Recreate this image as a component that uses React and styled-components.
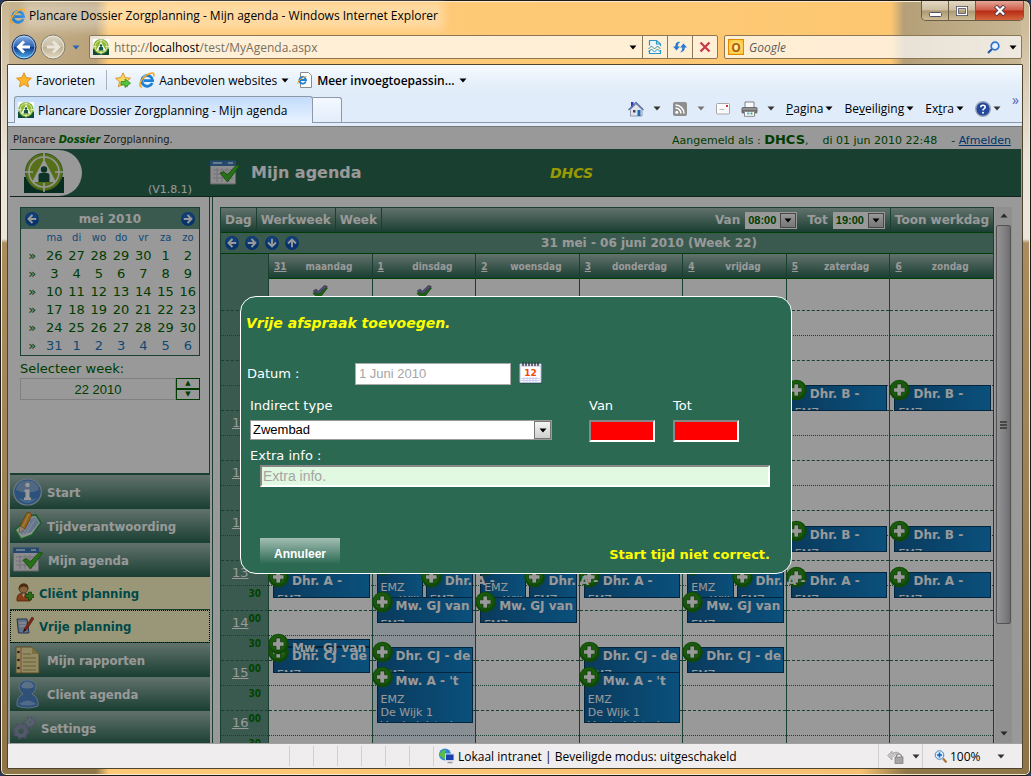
import React from 'react'
import styled, {createGlobalStyle, css} from 'styled-components'

const GlobalStyle = createGlobalStyle`
  *{
    box-sizing: border-box;
  }
  body{
    margin: 0;
    background-color: #2a3a5c;
  }
  button, input, select{
    font: inherit;
    color: inherit;
    margin: 0;
  }
  button{
    border: none;
    background: none;
    padding: 0;
    cursor: pointer;
  }
  svg{
    display: block;
    flex: none;
  }
`;

const chromeFont = '"Open Sans", "Noto Sans", sans-serif';
const pageFont = '"DejaVu Sans", sans-serif';
const narrowFont = '"DejaVu Sans Condensed", "DejaVu Sans", sans-serif';
const formFont = '"Liberation Sans", Arial, sans-serif';
const green = '#2b6953';
const darkGreen = '#006600';
const barGradient = 'linear-gradient(#a3beb4, #2b6953)';

/* ---------- icons ---------- */

const Caret = ({color = '#000'}) => (
  <svg width="8" height="5" viewBox="0 0 8 5"><path d="M0.5 0.5h7L4 4.5z" fill={color} /></svg>
)

const IeIcon = ({size = 16}) => (
  <svg width={size} height={size} viewBox="0 0 16 16">
    <path d="M13.200 11A5.400 5.400 0 1 1 13.600 8.600H4.600" fill="none" stroke="#1d7fd6" strokeWidth="2.800" />
    <path d="M3.600 7a4.600 4.600 0 0 1 4.400-4" fill="none" stroke="#7fd0fa" strokeWidth="1" />
    <path d="M2.500 15C-1.600 14 2.600 6.400 8 2.800c3.800-2.300 7.700-2.900 6.800 1" fill="none" stroke="#f2a51f" strokeWidth="1.600" strokeLinecap="round" />
  </svg>
)

const Favicon = ({size = 16}) => (
  <svg width={size} height={size} viewBox="0 0 40 40">
    <rect width="40" height="40" fill="#fff" />
    <path d="M0 24h40v16H0z" fill="#0f4a38" />
    <circle cx="20" cy="19" r="18.500" fill="#8fba2a" stroke="#4f8f2e" strokeWidth="1" />
    <circle cx="20" cy="19" r="15" fill="none" stroke="#fff" strokeWidth="1.500" />
    <path d="M20 0v7M20 30v9M0 19h9M31 19h9" stroke="#fff" strokeWidth="1.600" />
    <path d="M20 6l12 23H8z" fill="#fff" />
    <circle cx="20" cy="16.500" r="3.200" fill="#17563f" />
    <path d="M14.500 29v-6.500q0-2.500 2.500-2.500h6q2.500 0 2.500 2.500V29z" fill="#17563f" />
  </svg>
)

const NavCircle = ({flip}) => (
  <svg width="26" height="26" viewBox="0 0 26 26">
    <defs>
      <linearGradient id={flip ? 'fwd' : 'bck'} x1="0" y1="0" x2="0" y2="1">
        <stop offset="0" stopColor={flip ? '#d9d4c4' : '#8db4e6'} />
        <stop offset="0.480" stopColor={flip ? '#c9bfa6' : '#2a62b4'} />
        <stop offset="0.520" stopColor={flip ? '#bdb195' : '#0f3c8c'} />
        <stop offset="1" stopColor={flip ? '#e6dcc2' : '#4fb4f5'} />
      </linearGradient>
    </defs>
    <circle cx="13" cy="13" r="12" fill={`url(#${flip ? 'fwd' : 'bck'})`} stroke={flip ? '#85806f' : '#1c3761'} />
    <circle cx="13" cy="13" r="10.800" fill="none" stroke="#fff" strokeOpacity="0.5" />
    <path
      d="M19 13H8M13 7.500L7.500 13 13 18.500"
      transform={flip ? 'rotate(180 13 13)' : undefined}
      fill="none" stroke={flip ? '#e9e5d9' : '#fff'} strokeWidth="3"
    />
  </svg>
)

const Star = ({arrow}) => (
  <svg width="16" height="16" viewBox="0 0 16 16">
    <path d="M8 0.800l2.200 4.800 5.200 0.600-3.900 3.500 1.100 5.200L8 12.300l-4.600 2.600 1.100-5.200L0.600 6.200l5.200-0.600z" fill={arrow ? '#fbd968' : '#fdb52b'} stroke="#d98a17" strokeWidth="0.900" />
    {arrow && <path d="M6 9.500h4V7l5.500 4.200L10 15.500V13H6z" fill="#57c23b" stroke="#2c8a1c" strokeWidth="0.800" />}
  </svg>
)

const PageIe = () => (
  <svg width="16" height="16" viewBox="0 0 16 16">
    <path d="M3.500 0.500h8l3 3v12h-11z" fill="#fff" stroke="#8b8b8b" />
    <path d="M8.800 9.500A3.300 3.300 0 1 1 9 8H3" fill="none" stroke="#1d7fd6" strokeWidth="1.800" />
    <path d="M1 12c-1-2 3-6.500 8.500-7.500" fill="none" stroke="#f2a51f" />
  </svg>
)

const CompatIcon = () => (
  <svg width="14" height="16" viewBox="0 0 14 16">
    <path d="M1.500 6.500v-5h7l4 3.500v2M1.500 11v3.500h11V11M8.500 1.500V5h4" fill="#e9f7fb" stroke="#2f97c4" strokeWidth="1.200" />
    <path d="M0.500 10l3-3 3 3 3-3 3 3M0.500 13l3-3 3 3 3-3 3 3" fill="none" stroke="#2f97c4" />
  </svg>
)

const RefreshIcon = () => (
  <svg width="16" height="16" viewBox="0 0 16 16">
    <path d="M1 7.500L4.500 11.500 8 7.500H5.800q0-3.500 2.700-4.500Q3.500 2 3.200 7.500z" fill="#2b7bd0" />
    <path d="M8 8.500L11.500 4.500 15 8.500H12.800q0 4.500-5.300 5Q10.500 12 10.200 8.500z" fill="#2b7bd0" />
  </svg>
)

const StopIcon = () => (
  <svg width="12" height="12" viewBox="0 0 12 12"><path d="M1.500 1.500l9 9M10.500 1.500l-9 9" stroke="#c8374a" strokeWidth="2.200" /></svg>
)

const SearchIcon = () => (
  <svg width="13" height="13" viewBox="0 0 13 13">
    <circle cx="8" cy="5" r="3.800" fill="#eaf3fd" stroke="#2f76cf" strokeWidth="1.700" />
    <path d="M5 8l-4 4" stroke="#2358a8" strokeWidth="2.200" />
  </svg>
)

const HomeIcon = () => (
  <svg width="16" height="16" viewBox="0 0 16 16">
    <rect x="3" y="1" width="2.500" height="5" fill="#2a39c4" />
    <path d="M2.500 8.500L8 3l6 5.500V15h-11.500z" fill="#dfe4ee" stroke="#7d8597" strokeWidth="0.800" />
    <path d="M0.500 9L8 1.500 15.500 9" fill="none" stroke="#5a6fa8" strokeWidth="1.400" />
    <rect x="5" y="9" width="2.500" height="2.500" fill="#3a465c" />
    <rect x="9.500" y="9" width="3" height="6" fill="#1e6bb0" />
  </svg>
)

const RssIcon = () => (
  <svg width="16" height="16" viewBox="0 0 16 16">
    <rect x="1" y="1" width="14" height="14" rx="2" fill="#8e8e8e" />
    <circle cx="4.800" cy="11.300" r="1.500" fill="#fff" />
    <path d="M3.500 7a5.500 5.500 0 0 1 5.500 5.500M3.500 4a8.500 8.500 0 0 1 8.500 8.500" fill="none" stroke="#fff" strokeWidth="1.500" />
  </svg>
)

const MailIcon = () => (
  <svg width="14" height="12" viewBox="0 0 14 12">
    <rect x="0.500" y="0.500" width="13" height="10.500" rx="1" fill="#fbfbfb" stroke="#a7a7a7" />
    <path d="M3.500 6.500h5" stroke="#bbb" /><rect x="10" y="2" width="2" height="2" fill="#d0312b" />
  </svg>
)

const PrintIcon = () => (
  <svg width="17" height="16" viewBox="0 0 17 16">
    <path d="M4 1h9v6H4z" fill="#fafafa" stroke="#808080" />
    <rect x="0.500" y="6" width="16" height="6.500" rx="1.500" fill="#6d6d6d" />
    <path d="M1.500 8h14" stroke="#b5b5b5" />
    <path d="M3.500 10.500h10v4.800h-10z" fill="#fff" stroke="#888" />
    <path d="M6 12.500h2.500" stroke="#5db5e6" strokeWidth="2" /><path d="M9.500 12.500h2" stroke="#47a15a" strokeWidth="2" />
  </svg>
)

const HelpIcon = () => (
  <svg width="16" height="16" viewBox="0 0 16 16">
    <circle cx="8" cy="8" r="7.300" fill="#23489d" stroke="#9aa5b8" strokeWidth="1.400" />
    <path d="M5.800 6.200q0-2 2.200-2t2.200 1.800q0 1.200-1.300 1.900-0.900 0.500-0.900 1.500" fill="none" stroke="#fff" strokeWidth="1.600" />
    <circle cx="8" cy="11.800" r="1" fill="#fff" />
  </svg>
)

const ArrowDot = ({turn = 0, size = 14}) => (
  <svg width={size} height={size} viewBox="0 0 14 14">
    <circle cx="7" cy="7" r="6.900" fill="#0a55b5" />
    <path d="M1.500 6a5.500 5.500 0 0 1 11 0q-5.500 2-11 0" fill="#2f80da" opacity="0.500" />
    <path d="M11.300 7H4M7.500 3L3.500 7l4 4" transform={`rotate(${turn} 7 7)`} fill="none" stroke="#fff" strokeWidth="1.900" />
  </svg>
)

const PlusDot = () => (
  <svg width="21" height="22" viewBox="0 0 21 22">
    <circle cx="10.500" cy="11" r="10.300" fill="#1c7a0c" />
    <circle cx="10" cy="10" r="8.500" fill="#2a9716" />
    <path d="M8 5h4.500v3.800H16v4.400h-3.500V17H8v-3.800H4.500V8.800H8z" fill="#fff" stroke="#0f5c06" strokeWidth="0.700" />
  </svg>
)

const CheckMark = () => (
  <svg width="16" height="14" viewBox="0 0 16 14">
    <path d="M1 8.500l3-3L6.500 8 12.500 1.500l3 1.500L7 14z" fill="#2fa51a" stroke="#1c6a10" strokeWidth="0.600" />
    <path d="M1 6L4 4 6.500 6 12.500 0.300l3 1.200L7 9z" fill="#8080b8" stroke="#444a6a" strokeWidth="0.500" />
  </svg>
)

const AgendaIcon = () => (
  <svg width="30" height="26" viewBox="0 0 30 26">
    <path d="M0.500 5h25v19h-25z" fill="#e9e9ee" stroke="#a5a5ad" />
    <path d="M0 0.500h26V6H0z" fill="#3f7bb8" />
    <path d="M3 3h9M18 3h5" stroke="#d6e6f5" strokeWidth="1.500" />
    <path d="M3 10h20M3 14h20M3 18h20M7 8v14M12 8v14M17 8v14" stroke="#bfbfc8" />
    <path d="M10 13l4-1.500 3 3.500L26.500 5l3 1L17.500 22z" fill="#42ba2a" stroke="#1f7a12" strokeWidth="0.800" />
  </svg>
)

const InfoIcon = () => (
  <svg width="29" height="28" viewBox="0 0 29 28">
    <ellipse cx="14.500" cy="14" rx="13.800" ry="13" fill="#4a88cc" stroke="#b4c8e0" strokeWidth="1.200" />
    <path d="M3 12q1-9.500 11.500-9.500T26 12q-11.500 5-23 0" fill="#93b6dc" opacity="0.800" />
    <path d="M5 20q9.500 10 19 0-9.500 3-19 0" fill="#86bdf2" opacity="0.700" />
    <circle cx="14.500" cy="7" r="2.300" fill="#fff" />
    <path d="M11.500 11.500h5v8h1.500v2.500h-7v-2.500h1.500v-5.500h-1z" fill="#fff" />
  </svg>
)

const NotesIcon = () => (
  <svg width="29" height="30" viewBox="0 0 29 30">
    <path d="M2 19l6 9 11-4 9-12-5-8-6 1z" fill="#e8f3ea" stroke="#2b9c4a" strokeWidth="1.600" />
    <path d="M6 19l3 5 9-3 8-9-4-6-6 3z" fill="#a9c6f0" />
    <path d="M9 25l8-14M13 23l9-15" stroke="#e6eefb" strokeWidth="0.900" />
    <path d="M7 15l5 3 7-14q-1-3-5-2.500z" fill="#f3a62d" stroke="#a86212" strokeWidth="0.800" />
    <path d="M9.500 16.500l6.500-14" stroke="#ffd884" strokeWidth="1.200" />
    <path d="M7 15l-1 7 6-4z" fill="#f4dcb0" stroke="#9a7440" strokeWidth="0.500" />
  </svg>
)

const ClientIcon = () => (
  <svg width="18" height="20" viewBox="0 0 18 20">
    <path d="M1 18q-1-8 6.500-8t6.500 8z" fill="#dd6a2b" stroke="#8a3c12" strokeWidth="0.800" />
    <path d="M6 10.500l1.500 4 1.500-4z" fill="#fff" />
    <circle cx="7.500" cy="5.500" r="4.500" fill="#e0a566" stroke="#74421b" strokeWidth="0.800" />
    <path d="M2.800 6q0-5.500 5-5.500T12.300 6q-2-3-5-2.500T2.800 6z" fill="#7d4a1c" />
    <path d="M9.500 11.500h3V9h3v2.500H18v3h-2.500V17h-3v-2.500h-3z" fill="#45b52c" stroke="#186b0c" strokeWidth="0.700" />
  </svg>
)

const EditIcon = () => (
  <svg width="18" height="20" viewBox="0 0 18 20">
    <path d="M1 3h10l2 14H2.500z" fill="#a9bede" stroke="#3f5580" />
    <path d="M3 7h7M3.500 10h7" stroke="#fff" />
    <path d="M8 13L16 1l2 1.500L10.500 14z" fill="#d04020" stroke="#7d1e0b" strokeWidth="0.500" />
    <path d="M8 13l-1 3.500 3.500-2.500z" fill="#222" />
  </svg>
)

const ReportIcon = () => (
  <svg width="29" height="28" viewBox="0 0 29 28">
    <path d="M3 1h16l7 7v19H3z" fill="#f3e6a3" stroke="#8d7f3c" />
    <path d="M19 1v7h7z" fill="#cbbb6c" />
    <path d="M10 8h8M10 12h13M10 16h13M10 20h13M10 24h13" stroke="#b3a35a" />
    <path d="M8 1v26" stroke="#d87a5c" />
    <circle cx="5.500" cy="6" r="1.300" fill="#333" /><circle cx="5.500" cy="14" r="1.300" fill="#333" /><circle cx="5.500" cy="22" r="1.300" fill="#333" />
  </svg>
)

const PersonIcon = () => (
  <svg width="29" height="30" viewBox="0 0 29 30">
    <path d="M4 27q-1-9 6-12 -4-3-4-7.500Q7 1 14.500 1T23 7.500q0 4.500-4 7.500 7 3 6 12 -10.500 4-21 0z" fill="#4f88c6" stroke="#a5c2e2" strokeWidth="0.900" />
    <path d="M8 8q1-5.500 6.500-5.500T21 8q-6.500 3-13 0z" fill="#a9c9ea" opacity="0.800" />
    <path d="M6 25q8.500-7 17 0-8.500 3-17 0z" fill="#9cc6ee" opacity="0.700" />
  </svg>
)

const GearsIcon = () => (
  <svg width="23" height="24" viewBox="0 0 23 24">
    <circle cx="8" cy="15" r="4.800" fill="none" stroke="#8d93b3" strokeWidth="4" />
    <circle cx="8" cy="15" r="7.300" fill="none" stroke="#7f86a8" strokeWidth="2" strokeDasharray="2.900 2.830" />
    <circle cx="17" cy="6" r="3" fill="none" stroke="#9ba1c0" strokeWidth="2.500" />
    <circle cx="17" cy="6" r="4.800" fill="none" stroke="#7f86a8" strokeWidth="1.700" strokeDasharray="1.900 1.870" />
  </svg>
)

const DateIcon = () => (
  <svg width="24" height="23" viewBox="0 0 24 23">
    <path d="M2 2.500h20.500L23 21.500H1.500z" fill="#1f4a3c" />
    <path d="M1 2h21v18.500H1z" fill="#fff" stroke="#b9bce0" />
    <path d="M1 2h21v3H1z" fill="#dcdcf2" />
    <path d="M4 0.500v3.500M7 0.500v3.500M10 0.500v3.500M13 0.500v3.500M16 0.500v3.500M19 0.500v3.500" stroke="#222" strokeWidth="1.200" />
    <path d="M2 16.500h19M2 18.500h19M5 15v5M8 15v5M11 15v5M14 15v5M17 15v5" stroke="#c3c3ec" strokeWidth="0.800" />
    <text x="11.500" y="14" textAnchor="middle" fontFamily="DejaVu Sans" fontWeight="bold" fontSize="9" fill="#f04a10">12</text>
  </svg>
)

const ZoneIcon = () => (
  <svg width="17" height="16" viewBox="0 0 17 16">
    <circle cx="7" cy="6.500" r="6" fill="#2f86d8" />
    <path d="M2 5q3-4 6-3.500L7 5l2 3-3 3.500Q4 9 2 8z" fill="#5bbd45" />
    <rect x="7.500" y="6" width="8.500" height="6.500" fill="#1c3fae" stroke="#d5d9e4" />
    <path d="M9.500 14.500h5" stroke="#9a9a9a" strokeWidth="1.500" />
  </svg>
)

const LockIcon = () => (
  <svg width="17" height="15" viewBox="0 0 17 15">
    <path d="M0.500 6.500L5 2v2.500q5-3 8 0.500-5-1-8 3.500V11z" fill="#c4c4c4" stroke="#909090" strokeWidth="0.600" />
    <rect x="8" y="8" width="8" height="6.500" fill="#a5a5a5" stroke="#777" strokeWidth="0.700" />
    <path d="M9.500 8V6.500q2.500-3 5 0V8" fill="none" stroke="#888" strokeWidth="1.200" />
  </svg>
)

const ZoomIcon = () => (
  <svg width="13" height="13" viewBox="0 0 13 13">
    <circle cx="5.500" cy="5" r="4.300" fill="#d9ecfb" stroke="#4a86c0" />
    <path d="M5.500 2.500v5M3 5h5" stroke="#1560c0" strokeWidth="1.600" /><path d="M9 8.500l3.500 4" stroke="#a3702f" strokeWidth="2" />
  </svg>
)

/* ---------- data ---------- */

const weekdays = ['ma', 'di', 'wo', 'do', 'vr', 'za', 'zo'];
const weeks = [
  [26, 27, 28, 29, 30, 1, 2],
  [3, 4, 5, 6, 7, 8, 9],
  [10, 11, 12, 13, 14, 15, 16],
  [17, 18, 19, 20, 21, 22, 23],
  [24, 25, 26, 27, 28, 29, 30],
  [31, 1, 2, 3, 4, 5, 6],
];

const menu = [
  {label: 'Start', icon: <InfoIcon />},
  {label: 'Tijdverantwoording', icon: <NotesIcon />},
  {label: 'Mijn agenda', icon: <AgendaIcon />},
  {label: 'Cliënt planning', icon: <ClientIcon />, sub: true},
  {label: 'Vrije planning', icon: <EditIcon />, sub: true, focused: true},
  {label: 'Mijn rapporten', icon: <ReportIcon />},
  {label: 'Client agenda', icon: <PersonIcon />},
  {label: 'Settings', icon: <GearsIcon />},
];

const FIRST_HOUR = 8;
const HOUR_HEIGHT = 50;
const hours = [8, 9, 10, 11, 12, 13, 14, 15, 16];

const emz = ['EMZ'];
const address = ['EMZ', 'De Wijk 1', 'Verdedelstad'];
const double = [
  {start: '13:00', length: 45, name: '', lines: address, slot: 'left'},
  {start: '13:15', length: 30, name: 'Dhr. A -', lines: emz, slot: 'right'},
];
const visitA = {start: '13:15', length: 30, name: 'Dhr. A -', lines: emz};
const visitB = [
  {start: '09:30', length: 30, name: 'Dhr. B -', lines: emz},
  {start: '12:20', length: 30, name: 'Dhr. B -', lines: emz},
];
const visitGJ = {start: '13:45', length: 30, name: 'Mw. GJ van', lines: emz};
const visitCJ = {start: '14:45', length: 30, name: 'Dhr. CJ - de', lines: emz};
const visitT = {start: '15:15', length: 60, name: "Mw. A - 't", lines: address};

const days = [
  {date: 31, name: 'maandag', done: true, events: [visitA, visitCJ, {start: '14:35', length: 9, name: 'Mw. GJ van', lines: []}]},
  {date: 1, name: 'dinsdag', done: true, today: true, events: [...double, visitGJ, visitCJ, visitT]},
  {date: 2, name: 'woensdag', events: [...double, visitGJ]},
  {date: 3, name: 'donderdag', events: [visitA, visitCJ, visitT]},
  {date: 4, name: 'vrijdag', events: [...double, visitGJ, visitCJ]},
  {date: 5, name: 'zaterdag', events: [...visitB, visitA]},
  {date: 6, name: 'zondag', events: [...visitB, visitA]},
];

const toTop = (time) => {
  const [h, m] = time.split(':').map(Number);
  return Math.floor((h - FIRST_HOUR + m / 60) * HOUR_HEIGHT);
}

/* ---------- page parts ---------- */

function MiniCalendar() {
  return (
    <MonthBox>
      <MonthHead>
        <button aria-label="Vorige maand"><ArrowDot /></button>
        <span>mei 2010</span>
        <button aria-label="Volgende maand"><ArrowDot turn={180} /></button>
      </MonthHead>
      <MonthTable>
        <thead>
          <tr>
            <th />
            {weekdays.map((d) => <th key={d}>{d}</th>)}
          </tr>
        </thead>
        <tbody>
          {weeks.map((week, i) => (
            <tr key={i}>
              <td>»</td>
              {week.map((d) => <Day key={d} $other={i === 5}>{d}</Day>)}
            </tr>
          ))}
        </tbody>
      </MonthTable>
    </MonthBox>
  )
}

function Appointment({event}) {
  return (
    <EventBox $slot={event.slot} style={{top: toTop(event.start), height: Math.floor(event.length * HOUR_HEIGHT / 60) + 1}}>
      <EventBadge><PlusDot /></EventBadge>
      <EventName>{event.name}</EventName>
      <EventLines>
        {event.lines.map((line) => <div key={line}>{line}</div>)}
      </EventLines>
    </EventBox>
  )
}

function HourSelect({id, label, value}) {
  return (
    <HourField>
      <label htmlFor={id}>{label}</label>
      <SelectBox $small>
        <select id={id} defaultValue={value}><option>{value}</option></select>
        <SelectArrow><Caret /></SelectArrow>
      </SelectBox>
    </HourField>
  )
}

function Agenda() {
  return (
    <AgendaBox>
      <AgendaBar>
        <BarButton>Dag</BarButton>
        <BarButton>Werkweek</BarButton>
        <BarButton>Week</BarButton>
        <Spacer />
        <HourSelect id="hour-from" label="Van" value="08:00" />
        <HourSelect id="hour-to" label="Tot" value="19:00" />
        <BarButton $last>Toon werkdag</BarButton>
      </AgendaBar>
      <RangeBar>
        <button aria-label="Vorige"><ArrowDot /></button>
        <button aria-label="Volgende"><ArrowDot turn={180} /></button>
        <button aria-label="Omlaag"><ArrowDot turn={270} /></button>
        <button aria-label="Omhoog"><ArrowDot turn={90} /></button>
        <span>31 mei - 06 juni 2010 (Week 22)</span>
      </RangeBar>
      <WeekGrid>
        <HourColumn>
          <HeadSpace />
          {hours.map((h) => (
            <HourCell key={h}>
              <a href={`#${h}`}>{h}</a>
              <Minutes><span>00</span><span>30</span></Minutes>
            </HourCell>
          ))}
        </HourColumn>
        {days.map((day) => (
          <DayColumn key={day.name}>
            <DayHead><a href={`#${day.name}`}>{day.date}</a><span>{day.name}</span></DayHead>
            <AllDay>{day.done && <CheckMark />}</AllDay>
            <DayCanvas $today={day.today}>
              {hours.map((h) => <Slot key={h} />)}
              {day.events.map((event, i) => <Appointment key={i} event={event} />)}
            </DayCanvas>
          </DayColumn>
        ))}
      </WeekGrid>
    </AgendaBox>
  )
}

function AppointmentDialog() {
  return (
    <Dialog role="dialog" aria-labelledby="dialog-title">
      <h2 id="dialog-title">Vrije afspraak toevoegen.</h2>
      <DateRow>
        <label htmlFor="date">Datum :</label>
        <DateInput id="date" type="text" defaultValue="1 Juni 2010" />
        <button aria-label="Kies datum"><DateIcon /></button>
      </DateRow>
      <TypeRow>
        <Field>
          <label htmlFor="type">Indirect type</label>
          <SelectBox>
            <select id="type" defaultValue="Zwembad"><option>Zwembad</option></select>
            <SelectArrow $light><Caret /></SelectArrow>
          </SelectBox>
        </Field>
        <Times>
          <Field>
            <label htmlFor="from">Van</label>
            <TimeInput id="from" type="text" />
          </Field>
          <Field>
            <label htmlFor="to">Tot</label>
            <TimeInput id="to" type="text" />
          </Field>
        </Times>
      </TypeRow>
      <InfoField>
        <label htmlFor="info">Extra info :</label>
        <InfoInput id="info" type="text" placeholder="Extra info." />
      </InfoField>
      <DialogFoot>
        <CancelButton>Annuleer</CancelButton>
        <strong>Start tijd niet correct.</strong>
      </DialogFoot>
    </Dialog>
  )
}

export default function App() {
  return (
    <Window>
      <GlobalStyle />
      <TitleBar>
        <IeIcon />
        <h1>Plancare Dossier Zorgplanning - Mijn agenda - Windows Internet Explorer</h1>
        <WindowButtons>
          <button aria-label="Minimaliseren"><svg width="13" height="12" viewBox="0 0 13 12"><rect x="0.500" y="7.500" width="12" height="4" rx="1" fill="#fff" stroke="#525266" /></svg></button>
          <button aria-label="Maximaliseren"><svg width="12" height="10" viewBox="0 0 12 10"><rect x="1.500" y="1.500" width="9" height="7" fill="none" stroke="#525266" strokeWidth="3" /><rect x="1.500" y="1.500" width="9" height="7" fill="none" stroke="#fff" strokeWidth="1.300" /></svg></button>
          <button aria-label="Sluiten"><svg width="12" height="11" viewBox="0 0 12 11"><path d="M1.500 1l9 9M10.500 1l-9 9" stroke="#4b3b4b" strokeWidth="4" /><path d="M2 1.500l8 8M10 1.500l-8 8" stroke="#fff" strokeWidth="2.300" /></svg></button>
        </WindowButtons>
      </TitleBar>

      <AddressRow>
        <NavButtons>
          <button aria-label="Terug"><NavCircle /></button>
          <button aria-label="Vooruit"><NavCircle flip /></button>
          <button aria-label="Recente pagina's"><Caret color="#2a62b4" /></button>
        </NavButtons>
        <AddressBox>
          <Favicon />
          <Url role="textbox" aria-label="Adres">http://<b>localhost</b>/test/MyAgenda.aspx</Url>
          <button aria-label="Adressen"><Caret /></button>
          <BoxButton aria-label="Compatibiliteitsweergave"><CompatIcon /></BoxButton>
          <BoxButton aria-label="Vernieuwen"><RefreshIcon /></BoxButton>
          <BoxButton aria-label="Stoppen"><StopIcon /></BoxButton>
        </AddressBox>
        <SearchBox>
          <SearchLogo>O</SearchLogo>
          <input type="text" aria-label="Zoeken" placeholder="Google" />
          <button aria-label="Zoek"><SearchIcon /></button>
          <button aria-label="Zoekopties"><Caret /></button>
        </SearchBox>
      </AddressRow>

      <Frame>
        <LinksBar>
          <LinkButton><Star />Favorieten</LinkButton>
          <Divider />
          <LinkButton aria-label="Toevoegen"><Star arrow /></LinkButton>
          <LinkButton><IeIcon />Aanbevolen websites<Caret /></LinkButton>
          <LinkButton $bold><PageIe />Meer invoegtoepassin...<Caret /></LinkButton>
        </LinksBar>
        <TabBar>
          <Tab><Favicon />Plancare Dossier Zorgplanning - Mijn agenda</Tab>
          <NewTab aria-label="Nieuw tabblad" />
          <Commands>
            <Command $wide aria-label="Startpagina"><HomeIcon /><Caret color="#333" /></Command>
            <Command $wide aria-label="Feeds"><RssIcon /><Caret color="#777" /></Command>
            <Command aria-label="Mail"><MailIcon /></Command>
            <Command $wide aria-label="Afdrukken"><PrintIcon /><Caret color="#333" /></Command>
            <Command><span><u>P</u>agina</span><Caret /></Command>
            <Command><span>Be<u>v</u>eiliging</span><Caret /></Command>
            <Command><span>Ex<u>t</u>ra</span><Caret /></Command>
            <Command aria-label="Help"><HelpIcon /><Caret color="#333" /></Command>
            <More aria-label="Meer">»</More>
          </Commands>
        </TabBar>

        <Page>
          <TopLine>
            <div>Plancare <em>Dossier</em> Zorgplanning.</div>
            <Session>
              <span>Aangemeld als : <strong>DHCS</strong>,</span>
              <span>di 01 jun 2010 22:48</span>
              <span>- <a href="#logout">Afmelden</a></span>
            </Session>
          </TopLine>
          <Banner>
            <Brand>
              <LogoPanel><Favicon size={40} /></LogoPanel>
              <span>(V1.8.1)</span>
            </Brand>
            <BannerTitle><AgendaIcon /><h2>Mijn agenda</h2></BannerTitle>
            <BannerUser>DHCS</BannerUser>
          </Banner>
          <Body>
            <Sidebar>
              <SideTools>
                <MiniCalendar />
                <WeekLabel htmlFor="week">Selecteer week:</WeekLabel>
                <WeekPicker>
                  <input id="week" type="text" defaultValue="22 2010" />
                  <Stepper>
                    <button aria-label="Volgende week">▲</button>
                    <button aria-label="Vorige week">▼</button>
                  </Stepper>
                </WeekPicker>
              </SideTools>
              <nav>
                {menu.map((item) => (
                  <MenuItem key={item.label} href={`#${item.label}`} $sub={item.sub} $focused={item.focused}>
                    {item.icon}{item.label}
                  </MenuItem>
                ))}
              </nav>
            </Sidebar>
            <Main>
              <Agenda />
              <ScrollBar>
                <svg width="8" height="5" viewBox="0 0 8 5"><path d="M0.500 4.500h7L4 0.500z" fill="#444" /></svg>
                <Thumb><i /><i /><i /></Thumb>
                <Caret color="#444" />
              </ScrollBar>
            </Main>
          </Body>
          <Overlay>
            <AppointmentDialog />
          </Overlay>
        </Page>

        <StatusBar>
          <StatusCells><i /><i /><i /><i /><i /><i /><i /></StatusCells>
          <ZoneIcon />
          <Zone>Lokaal intranet | Beveiligde modus: uitgeschakeld</Zone>
          <StatusButton aria-label="Beveiliging"><LockIcon /><Caret color="#333" /></StatusButton>
          <StatusButton $zoom><ZoomIcon /><span>100%</span><Caret color="#333" /></StatusButton>
        </StatusBar>
      </Frame>
    </Window>
  )
}

/* ---------- browser window ---------- */

const Window = styled.div`
  height: 100vh;
  min-height: 600px;
  display: flex;
  flex-direction: column;
  padding: 0 7px 6px 6px;
  border: 1px solid #1f1a14;
  border-radius: 7px 7px 6px 6px;
  font-family: ${chromeFont};
  font-size: 12px;
  color: #000;
  box-shadow: inset 0 0 0 1px #f5ead4;
  background:
    linear-gradient(#c8b48f 0, #ebe5da 160px, #ebe5da 238px, #a98d5f 242px, #8e7548 100%) left / 8px 100% no-repeat,
    linear-gradient(#c8b48f 0, #ebe5da 160px, #ebe5da 238px, #a98d5f 242px, #8e7548 100%) right / 9px 100% no-repeat,
    linear-gradient(90deg, #8f774a 0, #8f774a 95px, #ffca77 108px, #f6c071 860px, #8f774a 905px) bottom / 100% 8px no-repeat,
    linear-gradient(90deg, #c8b48f 0, #b9a27a 95px, #ffcb79 108px, #fdc772 890px, #b49f78 903px, #c9b896 100%);
`;

const TitleBar = styled.header`
  display: flex;
  align-items: center;
  gap: 3px;
  height: 29px;
  flex: none;
  padding-left: 3px;
  h1{
    margin: 0;
    font-size: 12px;
    font-weight: 400;
    white-space: nowrap;
    background-color: rgba(255,255,255,0.3);
    box-shadow: 0 0 10px 6px rgba(255,255,255,0.3);
  }
`;

const WindowButtons = styled.div`
  display: flex;
  align-self: flex-start;
  margin: 0 -1px 0 auto;
  height: 20px;
  border: 1px solid #6b5c48;
  border-top: none;
  border-radius: 0 0 5px 5px;
  overflow: hidden;
  button{
    display: flex;
    align-items: center;
    justify-content: center;
    width: 27px;
    border-right: 1px solid #6b5c48;
    background: linear-gradient(#e3d8c5, #cdbd9f 48%, #ab9871 52%, #cdbc96);
  }
  button:last-child{
    width: 47px;
    border-right: none;
    background: linear-gradient(#e5a698, #cf5a48 48%, #b62a16 52%, #d4653c);
  }
`;

const AddressRow = styled.div`
  display: flex;
  align-items: center;
  gap: 6px;
  height: 34px;
  flex: none;
  padding: 0 1px 0 4px;
`;

const NavButtons = styled.div`
  display: flex;
  align-items: center;
  gap: 3px;
  width: 72px;
  button:last-child{
    margin-left: 3px;
  }
`;

const inputBox = css`
  display: flex;
  align-items: center;
  height: 24px;
  border: 1px solid #8a7753;
  border-radius: 2px;
  background-color: rgba(255,255,255,0.7);
`;

const AddressBox = styled.div`
  ${inputBox}
  flex: 1;
  padding-left: 3px;
`;

const Url = styled.div`
  flex: 1;
  padding-left: 5px;
  color: #77705f;
  b{
    color: #000;
    font-weight: 400;
  }
`;

const BoxButton = styled.button`
  display: flex;
  align-items: center;
  justify-content: center;
  width: 25px;
  height: 22px;
  border-left: 1px solid #8a7753;
  button + &{
    margin-left: 5px;
  }
  & + &{
    margin-left: 0;
  }
`;

const SearchBox = styled.div`
  ${inputBox}
  width: 298px;
  padding: 0 4px 0 3px;
  gap: 5px;
  input{
    flex: 1;
    min-width: 0;
    border: none;
    padding: 0;
    outline: none;
    background: transparent;
    font-style: italic;
  }
  input::placeholder{
    color: #5c5c5c;
  }
  button:last-child{
    padding-left: 4px;
  }
`;

const SearchLogo = styled.span`
  width: 16px;
  height: 16px;
  line-height: 15px;
  text-align: center;
  font-weight: 700;
  color: #b35c00;
  border: 1px solid #e08a00;
  background: radial-gradient(#fff3c0, #ffbe1a);
`;

const Frame = styled.div`
  flex: 1;
  min-height: 0;
  display: flex;
  flex-direction: column;
  border: 1px solid #4f452f;
  border-radius: 1px;
  background-color: #e0ecf9;
`;

const LinksBar = styled.div`
  display: flex;
  align-items: center;
  gap: 8px;
  height: 30px;
  flex: none;
  padding-left: 8px;
  background: linear-gradient(#f5fafe, #e6f0fb 60%, #e0ecf9);
`;

const LinkButton = styled.button`
  display: flex;
  align-items: center;
  gap: 4px;
  font-weight: ${(props) => props.$bold ? 600 : 400};
  white-space: nowrap;
`;

const Divider = styled.i`
  width: 1px;
  height: 20px;
  margin-left: 3px;
  background-color: #a9b2bd;
`;

const TabBar = styled.div`
  display: flex;
  align-items: flex-end;
  height: 28px;
  flex: none;
  padding-left: 6px;
  border-bottom: 1px solid #8d99a8;
`;

const Tab = styled.button`
  display: flex;
  align-items: center;
  gap: 4px;
  width: 299px;
  height: 27px;
  margin-bottom: -1px;
  padding: 0 3px;
  border: 1px solid #8d99a8;
  border-bottom: none;
  border-radius: 3px 3px 0 0;
  background: linear-gradient(#c2dcfb, #e9f3ff);
  white-space: nowrap;
`;

const NewTab = styled.button`
  width: 29px;
  height: 25px;
  border: 1px solid #8d99a8;
  border-left: none;
  border-bottom: none;
  border-radius: 0 3px 0 0;
  background: linear-gradient(#f4f9ff, #e2edfa);
`;

const Commands = styled.div`
  display: flex;
  align-items: center;
  align-self: stretch;
  gap: 11px;
  margin-left: auto;
  padding-right: 3px;
`;

const Command = styled.button`
  display: flex;
  align-items: center;
  gap: ${(props) => props.$wide ? 9 : 2}px;
`;

const More = styled.button`
  align-self: flex-start;
  line-height: 10px;
  font-size: 14px;
  color: #5560b8;
`;

const StatusBar = styled.footer`
  display: flex;
  align-items: center;
  height: 25px;
  flex: none;
  padding-right: 17px;
  border-top: 1px solid #a0a0a0;
  background-color: #f0edee;
`;

const StatusCells = styled.div`
  display: flex;
  align-self: stretch;
  margin: 2px 4px 2px 258px;
  i{
    width: 24px;
    border-right: 1px solid #d2cfcf;
  }
`;

const Zone = styled.span`
  flex: 1;
  padding-left: 3px;
`;

const StatusButton = styled.button`
  display: flex;
  align-items: center;
  align-self: stretch;
  gap: ${(props) => props.$zoom ? 3 : 8}px;
  width: ${(props) => props.$zoom ? 83 : 44}px;
  padding: 0 0 0 ${(props) => props.$zoom ? 11 : 8}px;
  border-left: 1px solid #d2cfcf;
  span{
    flex: 1;
    text-align: left;
  }
`;

/* ---------- web page ---------- */

const Page = styled.div`
  position: relative;
  flex: 1;
  min-height: 0;
  display: flex;
  flex-direction: column;
  margin: 3px 0 0;
  padding: 0 1px 0 2px;
  border-top: 1px solid #777;
  background-color: #fff;
  font-family: ${pageFont};
  color: ${darkGreen};
  overflow: hidden;
`;

const TopLine = styled.div`
  display: flex;
  align-items: center;
  justify-content: space-between;
  height: 22px;
  flex: none;
  padding: 3px 10px 0 3px;
  font-family: ${narrowFont};
  font-size: 11px;
  color: #333;
  em{
    font-weight: 700;
    color: #007a00;
  }
`;

const Session = styled.div`
  display: flex;
  align-items: baseline;
  gap: 14px;
  font-family: ${pageFont};
  font-size: 11px;
  color: ${darkGreen};
  strong{
    font-size: 13px;
  }
  a{
    color: #0058b8;
  }
`;

const Banner = styled.div`
  display: flex;
  height: 48px;
  flex: none;
  border-bottom: 1px solid #173d30;
  background-color: ${green};
`;

const Brand = styled.div`
  display: flex;
  align-items: flex-end;
  justify-content: space-between;
  width: 200px;
  padding: 1px 18px 0 0;
  font-size: 11px;
  color: #fff;
`;

const LogoPanel = styled.div`
  align-self: stretch;
  display: flex;
  align-items: center;
  width: 72px;
  padding-left: 14px;
  border-radius: 0 23px 23px 0;
  background-color: #fff;
`;

const BannerTitle = styled.div`
  display: flex;
  align-items: center;
  gap: 11px;
  width: 340px;
  h2{
    margin: 0;
    font-size: 16px;
    color: #fff;
  }
`;

const BannerUser = styled.strong`
  align-self: center;
  font-size: 14px;
  font-style: italic;
  color: #ff0;
`;

const Body = styled.div`
  flex: 1;
  min-height: 0;
  display: flex;
`;

const Sidebar = styled.aside`
  flex: none;
  width: 203px;
  padding-right: 2px;
  border-right: 1px solid ${green};
  overflow: hidden;
`;

const SideTools = styled.div`
  min-height: 278px;
  padding: 10px 9px 0 10px;
  border-right: 1px solid ${green};
  border-bottom: 2px solid ${green};
`;

const MonthBox = styled.div`
  border: 1px solid ${green};
`;

const MonthHead = styled.div`
  display: flex;
  align-items: center;
  justify-content: space-between;
  height: 21px;
  padding: 0 4px;
  font-size: 12px;
  font-weight: 700;
  color: #fff;
  background-color: #629685;
`;

const MonthTable = styled.table`
  width: 100%;
  table-layout: fixed;
  border-collapse: collapse;
  font-size: 13px;
  line-height: 18px;
  text-align: center;
  th, td{
    padding: 0;
  }
  th{
    font-size: 10px;
    font-weight: 400;
    color: #1a7abf;
  }
`;

const Day = styled.td`
  color: ${(props) => props.$other ? '#1a7abf' : darkGreen};
`;

const WeekLabel = styled.label`
  display: block;
  margin-top: 4px;
  line-height: 18px;
  font-size: 13px;
`;

const WeekPicker = styled.div`
  display: flex;
  height: 22px;
  input{
    flex: 1;
    min-width: 0;
    padding: 0;
    border: 1px solid #d5d5dd;
    font-family: ${formFont};
    font-size: 13px;
    text-align: center;
    background: transparent;
  }
`;

const Stepper = styled.div`
  display: flex;
  flex-direction: column;
  width: 24px;
  button{
    flex: 1;
    border: 1px solid ${darkGreen};
    font-size: 7px;
    line-height: 9px;
  }
`;

const MenuItem = styled.a`
  display: flex;
  align-items: center;
  gap: 5px;
  height: 34px;
  padding-left: 3px;
  font-family: ${narrowFont};
  font-size: 13px;
  font-weight: 700;
  text-decoration: none;
  color: #fff;
  background: ${barGradient};
  ${(props) => props.$sub && css`
    height: 33px;
    padding-left: 6px;
    color: #007a7a;
    background: #fffcc8;
    border-bottom: 1px solid ${green};
  `}
  ${(props) => props.$focused && css`
    outline: 1px dotted #000;
    outline-offset: -1px;
  `}
`;

const Main = styled.main`
  flex: 1;
  min-width: 0;
  display: flex;
  gap: 1px;
  padding: 10px 9px 0 7px;
`;

const AgendaBox = styled.section`
  flex: 1;
  min-width: 0;
  display: flex;
  flex-direction: column;
  border: 1px solid ${green};
  border-bottom: none;
`;

const AgendaBar = styled.div`
  display: flex;
  align-items: stretch;
  height: 25px;
  flex: none;
  border-bottom: 1px solid ${darkGreen};
  font-size: 12px;
  font-weight: 700;
  color: #fff;
  background: ${barGradient};
`;

const BarButton = styled.button`
  padding: 0 4px;
  border-right: 1px solid ${green};
  ${(props) => props.$last && css`
    border-right: none;
    border-left: 1px solid ${green};
  `}
`;

const Spacer = styled.div`
  flex: 1;
`;

const HourField = styled.div`
  display: flex;
  align-items: center;
  gap: 5px;
  margin-right: 10px;
  & + button{
    margin-left: -5px;
  }
`;

const SelectBox = styled.div`
  position: relative;
  display: flex;
  border: 1px solid #9a9a9a;
  background-color: #fff;
  color: #000;
  font-family: ${formFont};
  font-size: 13px;
  select{
    appearance: none;
    width: 100%;
    height: 18px;
    padding: 0 20px 0 2px;
    border: none;
    background: transparent;
  }
  ${(props) => props.$small && css`
    width: 52px;
    border-color: #fff;
    color: ${darkGreen};
    font-size: 11px;
    font-weight: 700;
    select{
      height: 15px;
      padding: 0 0 0 2px;
    }
  `}
`;

const SelectArrow = styled.i`
  position: absolute;
  top: 0;
  right: 0;
  bottom: 0;
  display: flex;
  align-items: center;
  justify-content: center;
  width: ${(props) => props.$light ? 17 : 16}px;
  border: 1px solid #777;
  background: ${(props) => props.$light ? 'linear-gradient(#f5f5f5, #cfcfcf)' : 'linear-gradient(#fff, #c4c4c4)'};
  pointer-events: none;
`;

const RangeBar = styled.div`
  display: flex;
  align-items: center;
  gap: 6px;
  height: 21px;
  flex: none;
  padding-left: 4px;
  border-bottom: 1px solid ${darkGreen};
  font-size: 12px;
  font-weight: 700;
  color: #fff;
  background-color: #629685;
  span{
    flex: 1;
    text-align: center;
  }
`;

const WeekGrid = styled.div`
  flex: 1;
  min-height: 0;
  display: grid;
  grid-template-columns: 47px repeat(7, minmax(0, 1fr));
  overflow: hidden;
`;

const HourColumn = styled.div`
  background-color: #629685;
`;

const HeadSpace = styled.div`
  height: 56px;
`;

const HourCell = styled.div`
  position: relative;
  display: flex;
  justify-content: flex-end;
  height: ${HOUR_HEIGHT}px;
  padding-right: 7px;
  border-top: 1px dashed ${green};
  font-size: 13px;
  background: repeating-linear-gradient(90deg, ${green} 0 1px, transparent 1px 2px) 0 24px / 100% 1px no-repeat;
  a{
    padding-top: 4px;
    color: #fff;
  }
`;

const Minutes = styled.div`
  display: flex;
  flex-direction: column;
  font-family: ${narrowFont};
  font-size: 10px;
  font-weight: 700;
  line-height: 15px;
  gap: 10px;
  color: #007000;
`;

const DayColumn = styled.div`
  display: flex;
  flex-direction: column;
  min-width: 0;
  border-left: 1px solid ${green};
`;

const DayHead = styled.div`
  display: flex;
  align-items: center;
  height: 25px;
  flex: none;
  padding-left: 5px;
  border-bottom: 1px solid ${darkGreen};
  font-family: ${narrowFont};
  font-size: 10px;
  font-weight: 700;
  color: #fff;
  background: ${barGradient};
  a{
    min-width: 12px;
    color: inherit;
  }
  span{
    flex: 1;
    text-align: center;
  }
`;

const AllDay = styled.div`
  display: flex;
  justify-content: center;
  height: 31px;
  flex: none;
  padding-top: 6px;
`;

const DayCanvas = styled.div`
  position: relative;
  background-color: ${(props) => props.$today ? '#e3f1fb' : 'transparent'};
`;

const Slot = styled.div`
  height: ${HOUR_HEIGHT}px;
  border-top: 1px dashed ${green};
  background: repeating-linear-gradient(90deg, ${green} 0 1px, transparent 1px 2px) 0 24px / 100% 1px no-repeat;
`;

const EventBox = styled.div`
  position: absolute;
  left: ${(props) => props.$slot === 'right' ? 'calc(50% + 2px)' : '4px'};
  right: ${(props) => props.$slot === 'left' ? 'calc(50% + 1px)' : '2px'};
  display: flex;
  flex-direction: column;
  border: 1px solid #063f66;
  font-size: 11px;
  line-height: 13px;
  color: #fff;
  background: linear-gradient(90deg, #11629c, #1186cf);
`;

const EventBadge = styled.span`
  position: absolute;
  top: -7px;
  left: -6px;
`;

const EventName = styled.strong`
  position: relative;
  z-index: 1;
  height: 20px;
  flex: none;
  padding: 2px 0 0 18px;
  font-size: 12px;
  white-space: nowrap;
`;

const EventLines = styled.div`
  flex: 1;
  min-height: 0;
  padding-left: 3px;
  white-space: nowrap;
  overflow: hidden;
`;

const ScrollBar = styled.div`
  display: flex;
  flex-direction: column;
  align-items: center;
  gap: 7px;
  width: 17px;
  padding: 6px 0 7px;
  background-color: #f0f0f2;
`;

const Thumb = styled.div`
  display: flex;
  flex-direction: column;
  align-items: center;
  justify-content: center;
  gap: 1px;
  width: 15px;
  flex: 1 1 400px;
  margin-bottom: 100px;
  border: 1px solid #8b8b8b;
  border-radius: 2px;
  background: linear-gradient(90deg, #f5f5f5, #d5d5da 60%, #b5b5bb);
  i{
    width: 7px;
    height: 2px;
    background-color: #777;
  }
`;

/* ---------- dialog ---------- */

const Overlay = styled.div`
  position: absolute;
  z-index: 2;
  inset: 0;
  display: flex;
  align-items: center;
  justify-content: center;
  padding-left: 2px;
  background-color: rgba(0,0,0,0.4);
`;

const Dialog = styled.form`
  width: 552px;
  padding: 17px 21px 9px 5px;
  border: 1px solid #fff;
  border-radius: 16px;
  font-size: 13px;
  line-height: 18px;
  color: #fff;
  background-color: ${green};
  h2{
    margin: 0;
    font-size: 14px;
    font-style: italic;
    color: #ff0;
  }
`;

const DateRow = styled.div`
  display: flex;
  align-items: center;
  margin-top: 30px;
  padding-left: 1px;
  label{
    width: 108px;
  }
  button{
    margin-left: 8px;
  }
`;

const DateInput = styled.input`
  width: 156px;
  height: 22px;
  padding: 0 3px;
  border: 1px solid #aaa;
  font-family: ${formFont};
  font-size: 13px;
  color: #a5a5a5;
  background-color: #fff;
`;

const TypeRow = styled.div`
  display: flex;
  gap: 37px;
  margin-top: 12px;
  padding-left: 4px;
`;

const Field = styled.div`
  display: flex;
  flex-direction: column;
  gap: 5px;
  & > ${SelectBox}{
    width: 302px;
  }
`;

const Times = styled.div`
  display: flex;
  gap: 18px;
`;

const TimeInput = styled.input`
  width: 66px;
  height: 22px;
  border: 2px solid;
  border-color: #888 #fff #fff #888;
  background-color: #f00;
`;

const InfoField = styled.div`
  display: flex;
  flex-direction: column;
  margin-top: 5px;
  padding-left: 4px;
`;

const InfoInput = styled.input`
  height: 22px;
  margin-left: 10px;
  padding: 0 1px;
  border: 2px solid;
  border-color: #888 #fff #fff #888;
  font-family: ${formFont};
  font-size: 14px;
  background-color: #e1f8e1;
  &::placeholder{
    color: #a5a5a5;
  }
`;

const DialogFoot = styled.div`
  display: flex;
  align-items: flex-end;
  justify-content: space-between;
  margin-top: 51px;
  padding-left: 14px;
  strong{
    color: #ff0;
  }
`;

const CancelButton = styled.button`
  width: 80px;
  height: 26px;
  padding-top: 6px;
  font-family: ${formFont};
  font-size: 12px;
  font-weight: 700;
  color: #fff;
  background: ${barGradient};
`;
